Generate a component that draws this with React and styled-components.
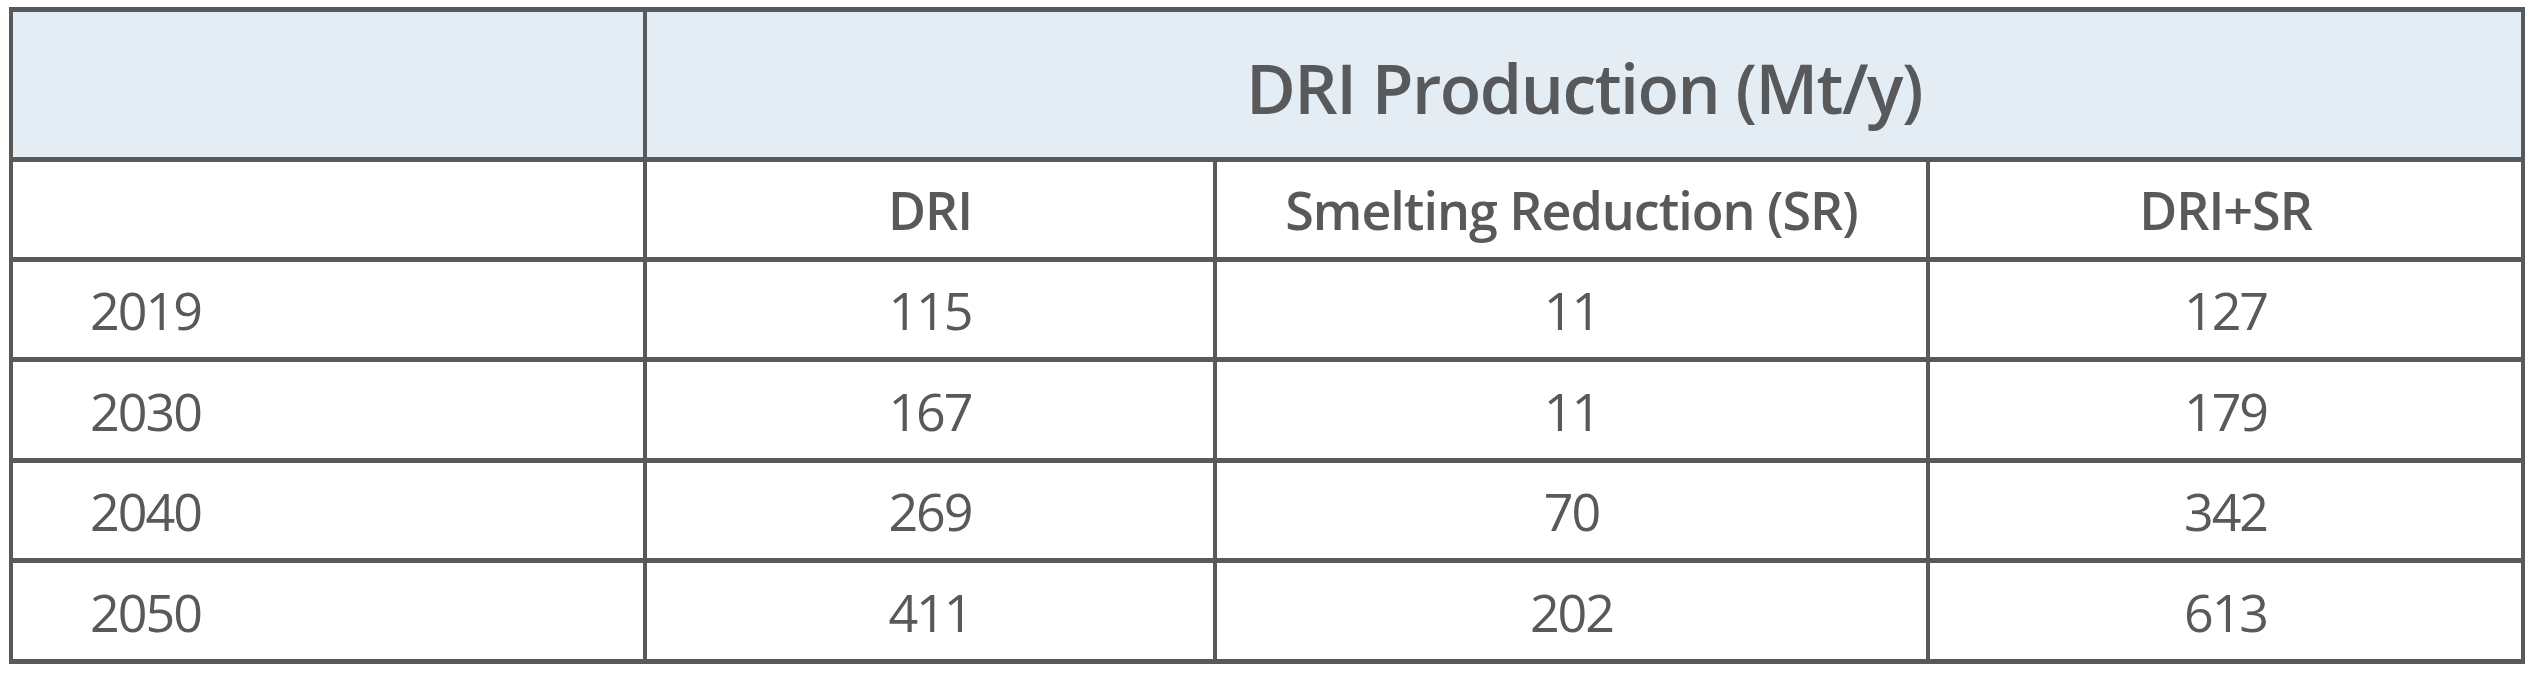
import React from 'react';
import styled, { createGlobalStyle } from 'styled-components';

const GlobalStyle = createGlobalStyle`
  html, body {
    margin: 0;
    padding: 0;
    background: #ffffff;
  }
  body {
    font-family: "Open Sans", "Noto Sans", sans-serif;
    color: #58595b;
  }
`;

const Page = styled.div`
  padding: 7px 0 0 9px;
`;

const Table = styled.table`
  width: 2512px;
  border-collapse: collapse;
  table-layout: fixed;
`;

const Cell = styled.td`
  border-style: solid;
  border-color: #58595b;
  border-width: 5px 4px;
  padding: 0;
  vertical-align: middle;
  text-align: ${({ $align }) => $align || 'center'};
  padding-left: ${({ $align }) => ($align === 'left' ? '77px' : '0')};
  font-size: 52px;
  font-weight: ${({ $bold }) => ($bold ? 600 : 400)};
  letter-spacing: ${({ $bold }) => ($bold ? '-1px' : '-2px')};
  color: #58595b;
`;

const TitleCell = styled(Cell)`
  background: #e4ecf4;
  font-size: 68px;
  font-weight: 600;
  letter-spacing: -1.5px;
  padding-top: 6px;
`;

const Row = styled.tr`
  height: ${({ $h }) => $h}px;
`;

const rows = [
  { year: '2019', dri: '115', sr: '11', total: '127', h: 100 },
  { year: '2030', dri: '167', sr: '11', total: '179', h: 101 },
  { year: '2040', dri: '269', sr: '70', total: '342', h: 100 },
  { year: '2050', dri: '411', sr: '202', total: '613', h: 101 },
];

export default function App() {
  return (
    <>
      <GlobalStyle />
      <Page>
        <Table>
          <colgroup>
            <col style={{ width: 634 }} />
            <col style={{ width: 570 }} />
            <col style={{ width: 713 }} />
            <col style={{ width: 595 }} />
          </colgroup>
          <tbody>
            <Row $h={150}>
              <TitleCell />
              <TitleCell colSpan={3}>DRI Production (Mt/y)</TitleCell>
            </Row>
            <Row $h={100}>
              <Cell />
              <Cell $bold>DRI</Cell>
              <Cell $bold>Smelting Reduction (SR)</Cell>
              <Cell $bold>DRI+SR</Cell>
            </Row>
            {rows.map((r) => (
              <Row key={r.year} $h={r.h}>
                <Cell $align="left">{r.year}</Cell>
                <Cell>{r.dri}</Cell>
                <Cell>{r.sr}</Cell>
                <Cell>{r.total}</Cell>
              </Row>
            ))}
          </tbody>
        </Table>
      </Page>
    </>
  );
}
